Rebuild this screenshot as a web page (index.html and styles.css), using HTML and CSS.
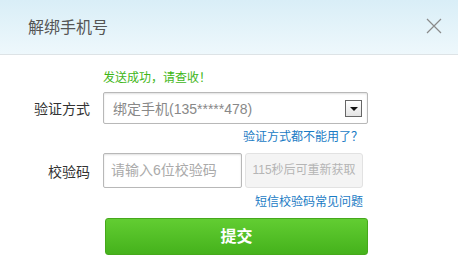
FILE: index.html
```html
<!DOCTYPE html>
<html lang="zh-CN">

<head>
    <meta charset="UTF-8">
    <title>解绑手机号</title>
    <link rel="stylesheet" href="styles.css">
</head>

<body>
    <div class="dialog">
        <div class="header">
            <span class="title">解绑手机号</span>
            <svg class="close" width="16" height="16" viewBox="0 0 16 16">
                <path d="M1 1L15 15M15 1L1 15" stroke="#8a8a8a" stroke-width="1.2" fill="none" />
            </svg>
        </div>

        <div class="body">
            <div class="row tip-row">
                <span class="label"></span>
                <span class="tip">发送成功，请查收！</span>
            </div>

            <div class="row">
                <span class="label">验证方式</span>
                <div class="select">
                    <span>绑定手机(135*****478)</span>
                    <span class="arrow"></span>
                </div>
            </div>
            <div class="link-row"><a href="#">验证方式都不能用了？</a></div>

            <div class="row">
                <span class="label">校验码</span>
                <div class="input">请输入6位校验码</div>
                <div class="resend">115秒后可重新获取</div>
            </div>
            <div class="link-row"><a href="#">短信校验码常见问题</a></div>

            <div class="row">
                <span class="label"></span>
                <div class="submit">提交</div>
            </div>
        </div>
    </div>
</body>

</html>
```

FILE: styles.css
```css
body {
    margin: 0;
    background: #fff;
    font-family: "Liberation Sans", "Noto Sans CJK SC", sans-serif;
}

.dialog {
    width: 458px;
    height: 278px;
    background: #fff;
}

.header {
    height: 55px;
    border-bottom: 1px solid #dde3e6;
    background: linear-gradient(to bottom, #d9eef7, #eef8fc);
    display: flex;
    align-items: center;
    justify-content: space-between;
    padding: 0 16px 0 28px;
    box-sizing: border-box;
}

.title {
    font-size: 16px;
    color: #555;
    margin-top: -2px;
}

.close {
    margin-top: -2px;
}

.body {
    padding-top: 13px;
}

.row {
    display: flex;
    align-items: center;
}

.label {
    width: 90px;
    text-align: right;
    padding-right: 13px;
    font-size: 14px;
    color: #333;
    flex-shrink: 0;
}

.tip-row {
    height: 17px;
    margin-bottom: 7px;
}

.tip {
    font-size: 12px;
    color: #3fb618;
}

.select {
    width: 265px;
    height: 32px;
    box-sizing: border-box;
    border: 1px solid #b8b8b8;
    border-radius: 2px;
    box-shadow: inset 0 1px 2px #e0e0e0;
    display: flex;
    align-items: center;
    justify-content: space-between;
    padding: 0 5px 0 9px;
    font-size: 14px;
    color: #888;
}

.arrow {
    width: 17px;
    height: 17px;
    box-sizing: border-box;
    border: 1px solid #666;
    background: linear-gradient(to bottom, #fff, #e4e4e4);
    position: relative;
}

.arrow::after {
    content: "";
    position: absolute;
    left: 4px;
    top: 6px;
    border-left: 4px solid transparent;
    border-right: 4px solid transparent;
    border-top: 4px solid #111;
}

.link-row {
    width: 363px;
    text-align: right;
    font-size: 12px;
    height: 29px;
    line-height: 16px;
    padding-top: 5px;
    box-sizing: border-box;
}

.link-row + .row + .link-row {
    height: 30px;
    padding-top: 6px;
}

.link-row a {
    color: #1a7bc4;
    text-decoration: none;
}

.input {
    width: 139px;
    height: 35px;
    box-sizing: border-box;
    border: 1px solid #b8b8b8;
    border-radius: 2px;
    box-shadow: inset 0 1px 2px #e0e0e0;
    font-size: 14px;
    color: #aaa;
    padding-left: 7px;
    line-height: 33px;
}

.resend {
    width: 118px;
    height: 35px;
    margin-left: 3px;
    box-sizing: border-box;
    border: 1px solid #e2e2e2;
    border-radius: 3px;
    background: #f4f4f4;
    font-size: 12px;
    color: #b5b5b5;
    text-align: center;
    line-height: 33px;
}

.submit {
    width: 263px;
    height: 37px;
    margin-left: 2px;
    border-radius: 3px;
    border: 1px solid #46a81c;
    box-sizing: border-box;
    background: linear-gradient(to bottom, #62cd32, #45b21c);
    color: #fff;
    font-size: 16px;
    font-weight: bold;
    text-align: center;
    line-height: 35px;
}
```
